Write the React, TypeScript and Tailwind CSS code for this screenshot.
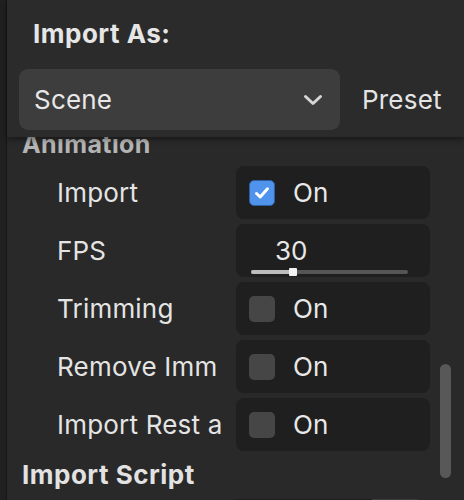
import React from "react";

const font = { fontFamily: "Inter, 'Noto Sans', sans-serif" };

const Check = ({ on }: { on?: boolean }) =>
  on ? (
    <div className="w-[26px] h-[26px] rounded-[5px] bg-[#4f93ec] border border-[#2d5f9e] flex items-center justify-center">
      <svg width="18" height="18" viewBox="0 0 18 18" fill="none">
        <path d="M3.5 9.5 L7.2 13 L14.5 4.8" stroke="white" strokeWidth="3" strokeLinecap="round" strokeLinejoin="round" />
      </svg>
    </div>
  ) : (
    <div className="w-[26px] h-[26px] rounded-[5px] bg-[#464646]" />
  );

const Row = ({ label, children }: { label: string; children: React.ReactNode }) => (
  <div className="flex items-center h-[53px]">
    <div className="w-[213px] pl-[34px] text-[26px] tracking-[0.2px] text-[#e4e4e4] whitespace-nowrap overflow-hidden">{label}</div>
    <div className="w-[194px] h-[53px] rounded-[8px] bg-[#1f1f1f] flex items-center">{children}</div>
  </div>
);

const Toggle = ({ on }: { on?: boolean }) => (
  <div className="flex items-center pl-[13px] gap-[18px]">
    <Check on={on} />
    <span className="text-[26px] text-[#e8e8e8]">On</span>
  </div>
);

export default function App() {
  return (
    <div className="w-[464px] h-[500px] flex bg-[#1b1b1b] overflow-hidden" style={font}>
      <div className="w-[7px] shrink-0 bg-[#202020] border-r border-[#161616]" />
      <div className="flex-1 flex flex-col bg-[#292929]">
        <div className="h-[137px] shrink-0 bg-[#2b2b2b] relative z-10 shadow-[0_2px_6px_rgba(0,0,0,0.45)]">
          <div className="pl-[26px] pt-[18px] text-[26px] tracking-[0.5px] font-bold text-[#e6e6e6] leading-[32px]">Import As:</div>
          <div className="flex items-center mt-[19px] pl-[12px]">
            <div className="w-[321px] h-[61px] rounded-[9px] bg-[#3d3d3d] flex items-center justify-between pl-[15px] pr-[17px]">
              <span className="text-[26px] tracking-[0.2px] text-[#e8e8e8]">Scene</span>
              <svg width="20" height="12" viewBox="0 0 20 12" fill="none">
                <path d="M2.5 2.5 L10 9.5 L17.5 2.5" stroke="#d6d6d6" strokeWidth="3" strokeLinecap="round" strokeLinejoin="round" />
              </svg>
            </div>
            <span className="ml-[22px] text-[26px] tracking-[0.2px] text-[#e4e4e4]">Preset</span>
          </div>
        </div>
        <div className="flex-1 relative overflow-hidden">
          <div className="-mt-[8px] pl-[15px]">
            <div className="text-[25px] tracking-[0.4px] font-bold text-[#b4b4b4] leading-[30px]">Animation</div>
            <div className="flex flex-col gap-[5px] mt-[7px] pl-[1px]">
              <Row label="Import">
                <Toggle on />
              </Row>
              <Row label="FPS">
                <div className="flex flex-col pl-[15px] pt-[9px] w-full">
                  <span className="pl-[24px] text-[26px] text-[#e8e8e8] leading-[30px]">30</span>
                  <div className="relative mt-[4px] w-[157px] h-[4px] bg-[#555555] rounded-full">
                    <div className="absolute left-0 top-0 h-[4px] w-[40px] bg-[#bdbdbd] rounded-full" />
                    <div className="absolute left-[38px] -top-[2px] w-[8px] h-[8px] bg-[#f2f2f2] rounded-[1px]" />
                  </div>
                </div>
              </Row>
              <Row label="Trimming">
                <Toggle />
              </Row>
              <Row label="Remove Imm">
                <Toggle />
              </Row>
              <Row label="Import Rest a">
                <Toggle />
              </Row>
            </div>
            <div className="text-[26px] tracking-[0.5px] font-bold text-[#e2e2e2] leading-[30px] mt-[9px]">Import Script</div>
            <div className="flex mt-[9px] ml-[207px]">
              <div className="w-[143px] h-[30px] rounded-l-[8px] bg-[#1f1f1f]" />
              <div className="w-[51px] h-[30px] rounded-r-[8px] bg-[#3d3d3d]" />
            </div>
          </div>
          <div className="absolute left-[433px] top-[227px] w-[11px] h-[114px] rounded-full bg-[#585858]" />
        </div>
      </div>
    </div>
  );
}
